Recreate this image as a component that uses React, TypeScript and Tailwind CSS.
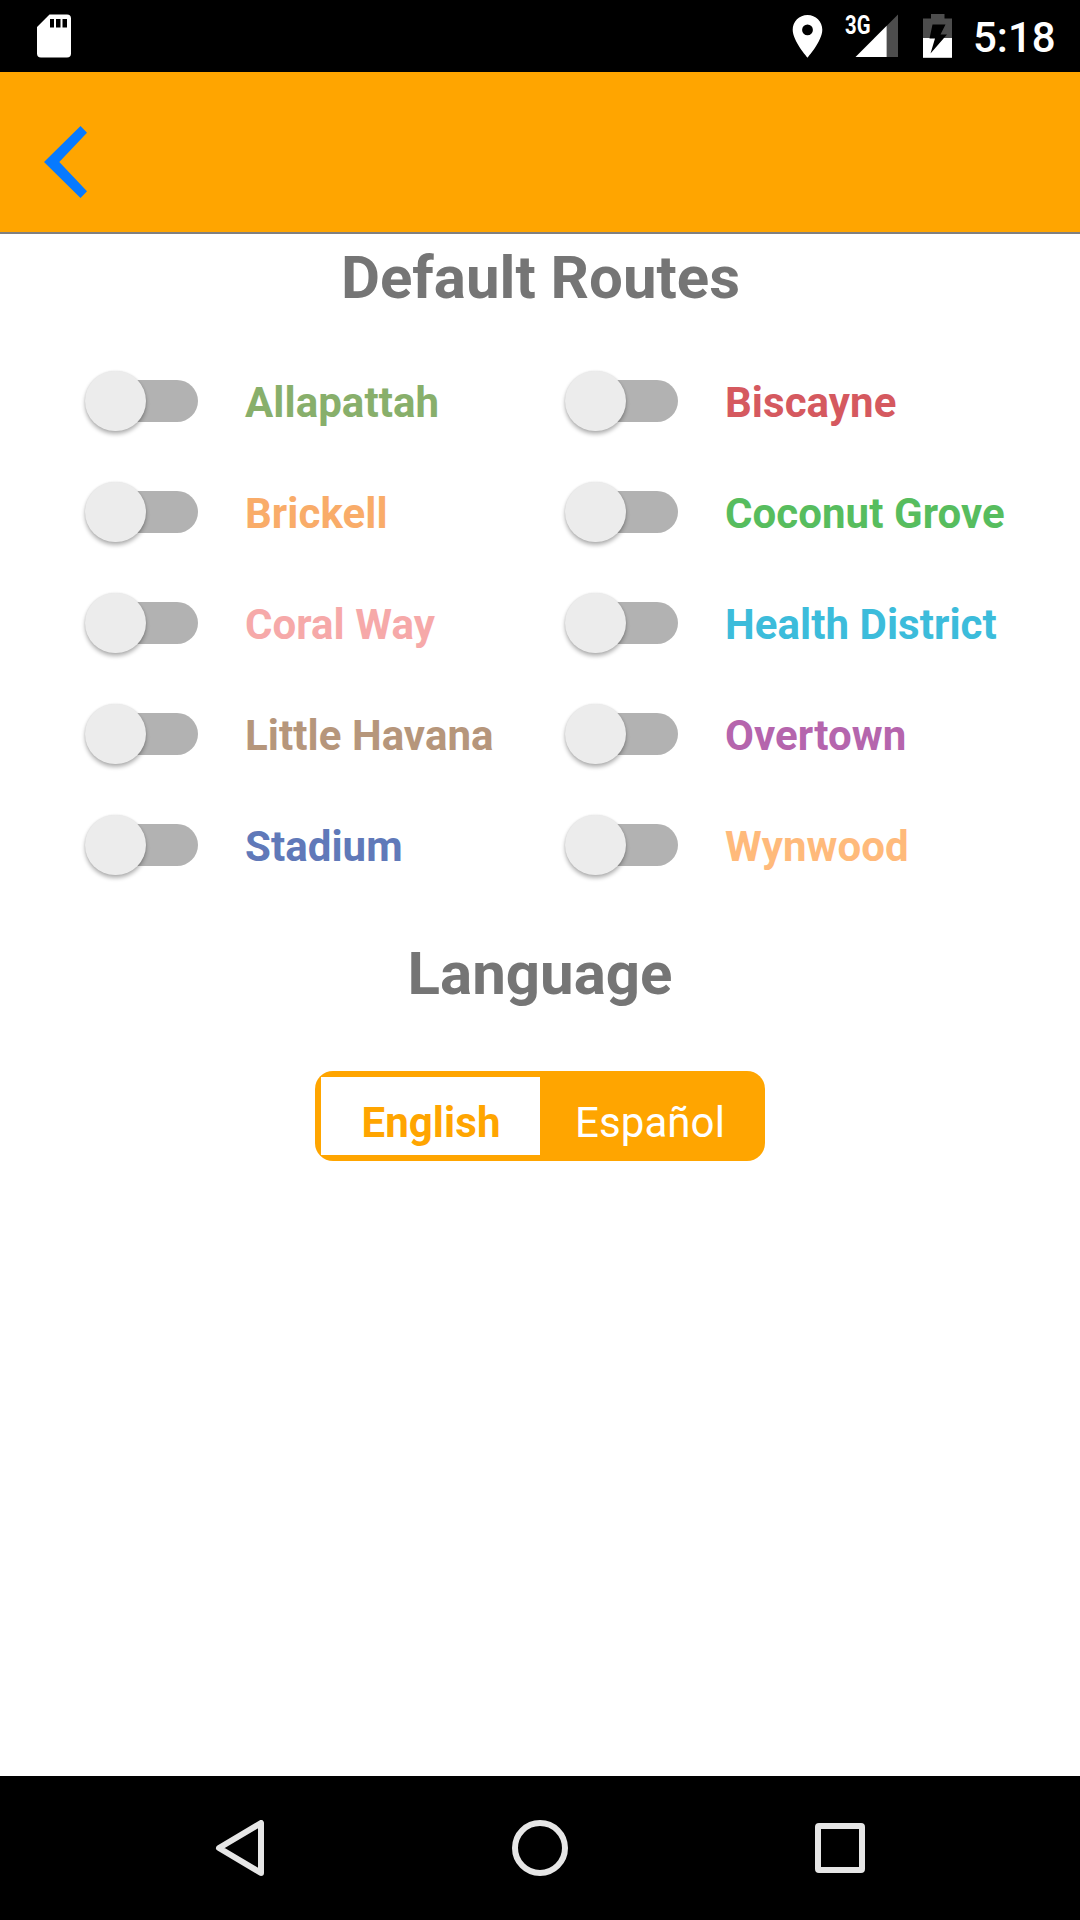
const routes = [
  { name: 'Allapattah', color: 'text-[#88af6b]' },
  { name: 'Biscayne', color: 'text-[#d5595f]' },
  { name: 'Brickell', color: 'text-[#f9ac69]' },
  { name: 'Coconut Grove', color: 'text-[#57bd5e]' },
  { name: 'Coral Way', color: 'text-[#f6a9a9]' },
  { name: 'Health District', color: 'text-[#3cbcdb]' },
  { name: 'Little Havana', color: 'text-[#b6967b]' },
  { name: 'Overtown', color: 'text-[#b565ad]' },
  { name: 'Stadium', color: 'text-[#6079b9]' },
  { name: 'Wynwood', color: 'text-[#ffba7b]' },
];

function StatusBar() {
  return (
    <div className="flex h-[72px] w-full shrink-0 items-center bg-black pr-[25px] pl-[36px] text-white">
      <svg className="mr-auto h-[44px] w-[36px]" viewBox="0 0 36 44">
        <path
          fillRule="evenodd"
          fill="#fff"
          d="M13.500 .5H31a4 4 0 0 1 4 4V39.500a4 4 0 0 1-4 4H5a4 4 0 0 1-4-4V13ZM14 5v8.500h4V5Zm6 0v8.500h4.500V5Zm6.500 0v8.500H31V5Z"
        />
      </svg>
      <svg className="h-[44px] w-[32px]" viewBox="0 0 32 44">
        <path
          fillRule="evenodd"
          fill="#fff"
          d="M15.500 1C7.200 1 .700 7.500.700 15.800.700 27 15.500 43.700 15.500 43.700S30.300 27 30.300 15.800C30.300 7.500 23.800 1 15.500 1Zm0 9.500a5.400 5.400 0 1 1 0 10.800 5.400 5.400 0 0 1 0-10.800Z"
        />
      </svg>
      <div className="relative ml-[21px] h-[44px] w-[54px]">
        <svg className="h-[44px] w-[54px]" viewBox="0 0 54 44">
          <path fill="#4d4d4d" d="M53 .500V43H41.500V12Z" />
          <path fill="#fff" d="M41.700 11.800V43H10.500Z" />
        </svg>
        <span className="absolute top-[-3px] left-0 origin-left scale-x-[0.78] text-[26px] leading-[28px] font-bold">3G</span>
      </div>
      <svg className="ml-[24px] h-[44px] w-[30px]" viewBox="0 0 30 44">
        <path fill="#4d4d4d" d="M8 0H21.500V4.500H29V24H0V4.500H8Z" />
        <path fill="#fff" d="M0 24H29V43.800H0Z" />
        <path fill="#000" d="M9.500 10.500H22.500L17.500 20.500H24L7.500 39.500 12 24.500H6.500Z" />
      </svg>
      <span className="ml-[20px] w-[82px] pt-[3px] text-[42px] leading-[48px] font-medium">5:18</span>
    </div>
  );
}

function Toggle() {
  return (
    <button type="button" role="switch" aria-checked="false" className="relative h-[60px] w-[113px]">
      <span className="absolute top-[9px] right-0 h-[42px] w-[97px] rounded-full bg-[#b2b2b2]" />
      <span className="absolute top-0 left-0 size-[60.500px] rounded-full bg-[#ececec] shadow-[0_3px_4px_rgba(0,0,0,0.3),0_0_2px_rgba(0,0,0,0.1)]" />
    </button>
  );
}

export default function App() {
  return (
    <div className="flex h-[1920px] w-[1080px] flex-col bg-white font-['Roboto',sans-serif]">
      <StatusBar />
      <header className="flex h-[162px] shrink-0 items-center border-b-2 border-[#808080] bg-[#ffa500] pt-[20px] pl-[44px]">
        <svg className="h-[74px] w-[44px]" viewBox="0 0 44 74">
          <path d="M0 37 36.500 1 43 7.700 15.300 37 43 66.300 36.500 73Z" fill="#077aff" />
        </svg>
      </header>
      <main className="flex flex-1 flex-col items-center">
        <h1 className="mt-[9px] pl-[1px] text-[60px] leading-[70px] font-bold text-[#757575]">Default Routes</h1>
        <div className="mt-[32px] grid w-full grid-cols-[480px_480px] pl-[85px]">
          {routes.map((r) => (
            <div key={r.name} className="flex h-[111px] items-center">
              <Toggle />
              <span className={`ml-[47px] pt-[5px] text-[42px] leading-[48px] font-bold tracking-[0.06px] whitespace-nowrap ${r.color}`}>{r.name}</span>
            </div>
          ))}
        </div>
        <h2 className="mt-[39px] text-[60px] leading-[70px] font-bold text-[#757575]">Language</h2>
        <div className="mt-[62px] flex h-[90px] w-[450px] rounded-[18px] bg-[#ffa500] p-[6px] text-[42px] leading-[48px] tracking-[0.08px]">
          <button type="button" className="flex-1 bg-white pt-[13px] pl-[1px] font-bold text-[#ffa500]">English</button>
          <button type="button" className="flex-1 pt-[13px] pl-[1px] text-white">Español</button>
        </div>
      </main>
      <nav className="flex h-[144px] shrink-0 items-center bg-black">
        <svg className="ml-[212px] size-[56px]" viewBox="0 0 56 56">
          <path d="M49 3V53L7 28Z" fill="none" stroke="#e6e6e6" strokeWidth="6" strokeLinejoin="round" />
        </svg>
        <svg className="ml-[244px] size-[56px]" viewBox="0 0 56 56">
          <circle cx="28" cy="28" r="25" fill="none" stroke="#e6e6e6" strokeWidth="6" />
        </svg>
        <svg className="ml-[244px] size-[56px]" viewBox="0 0 56 56">
          <rect x="6" y="6" width="44" height="44" rx="1" fill="none" stroke="#e6e6e6" strokeWidth="6" />
        </svg>
      </nav>
    </div>
  );
}
